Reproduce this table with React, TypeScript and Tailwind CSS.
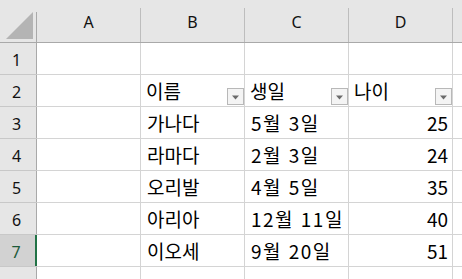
import React from "react";

const cellFont = { fontFamily: '"Noto Sans CJK KR", "Noto Sans", sans-serif' };
const headFont = { fontFamily: '"Noto Sans", "Liberation Sans", sans-serif' };

type Row = { b?: string; c?: string; d?: string; header?: boolean };

const rows: Row[] = [
  {},
  { b: "이름", c: "생일", d: "나이", header: true },
  { b: "가나다", c: "5월 3일", d: "25" },
  { b: "라마다", c: "2월 3일", d: "24" },
  { b: "오리발", c: "4월 5일", d: "35" },
  { b: "아리아", c: "12월 11일", d: "40" },
  { b: "이오세", c: "9월 20일", d: "51" },
  {},
];

function FilterButton() {
  return (
    <div className="mb-[1px] flex h-[17px] w-[17px] shrink-0 items-center justify-center border border-[#b8b8b8] bg-[#f4f4f4]">
      <svg width="9" height="5" viewBox="0 0 9 5" className="mt-[1px]">
        <path d="M1 0.5 H8 L4.5 4.5 Z" fill="#6b6b6b" />
      </svg>
    </div>
  );
}

function Cell({
  text,
  header,
  right,
  date,
}: {
  text?: string;
  header?: boolean;
  right?: boolean;
  date?: boolean;
}) {
  return (
    <div
      className={`flex h-[32px] w-[104px] shrink-0 items-end border-r border-b border-[#d4d4d4] text-[19px] leading-none text-black ${
        right ? "justify-end pr-[4px]" : "justify-between pl-[6px]"
      }`}
      style={cellFont}
    >
      {header ? (
        <>
          <span className="-ml-[1px] pb-[6px]">{text}</span>
          <FilterButton />
        </>
      ) : (
        <span
          className={`pb-[6px] ${date ? "tracking-[1.5px] [word-spacing:1px]" : ""}`}
        >
          {text}
        </span>
      )}
    </div>
  );
}

function HeaderCell({ label }: { label: string }) {
  return (
    <div className="flex h-full w-[104px] shrink-0">
      <div className="flex flex-1 items-center justify-center pt-[1px] text-[16px] text-[#111]" style={headFont}>
        {label}
      </div>
      <div className="mt-[8px] h-[34px] w-px bg-[#bdbdbd]" />
    </div>
  );
}

export default function App() {
  return (
    <div className="h-[279px] w-[462px] overflow-hidden bg-white">
      {/* column headers */}
      <div className="flex h-[43px] border-b border-[#a9a9a9] bg-[#e6e6e6]">
        <div className="flex h-full w-[37px] shrink-0">
          <div className="flex flex-1 items-start pl-[6px] pt-[12px]">
            <svg width="28" height="27" viewBox="0 0 28 27">
              <path d="M0 27 L27 0 L27 27 Z" fill="#b4b4b4" />
            </svg>
          </div>
          <div className="mt-[12px] h-[30px] w-px bg-[#a9a9a9]" />
        </div>
        {["A", "B", "C", "D"].map((l) => (
          <HeaderCell key={l} label={l} />
        ))}
        <div className="flex-1" />
      </div>

      {/* sheet rows; the last one is cut by the window edge */}
      {rows.map((r, i) => {
        const selected = i === 6;
        const partial = i === rows.length - 1;
        return (
          <div key={i} className="flex">
            <div
              className={`flex h-[32px] w-[37px] shrink-0 border-b border-[#c8c8c8] ${
                selected ? "bg-[#d2d2d2]" : "bg-[#e6e6e6]"
              }`}
            >
              <div
                className={`flex flex-1 items-center justify-center pr-[3px] pt-[2px] text-[16px] ${
                  selected ? "text-[#1d5a3a]" : "text-[#111]"
                }`}
                style={headFont}
              >
                {partial ? null : i + 1}
              </div>
              {selected ? (
                <div className="h-full w-[2px] bg-[#217346]" />
              ) : (
                <div className="h-full w-px bg-[#a9a9a9]" />
              )}
            </div>
            <Cell />
            <Cell text={r.b} header={r.header} />
            <Cell text={r.c} header={r.header} date />
            {r.header ? <Cell text={r.d} header /> : <Cell text={r.d} right />}
            <div className="h-[32px] flex-1 border-b border-[#d4d4d4]" />
          </div>
        );
      })}
    </div>
  );
}
